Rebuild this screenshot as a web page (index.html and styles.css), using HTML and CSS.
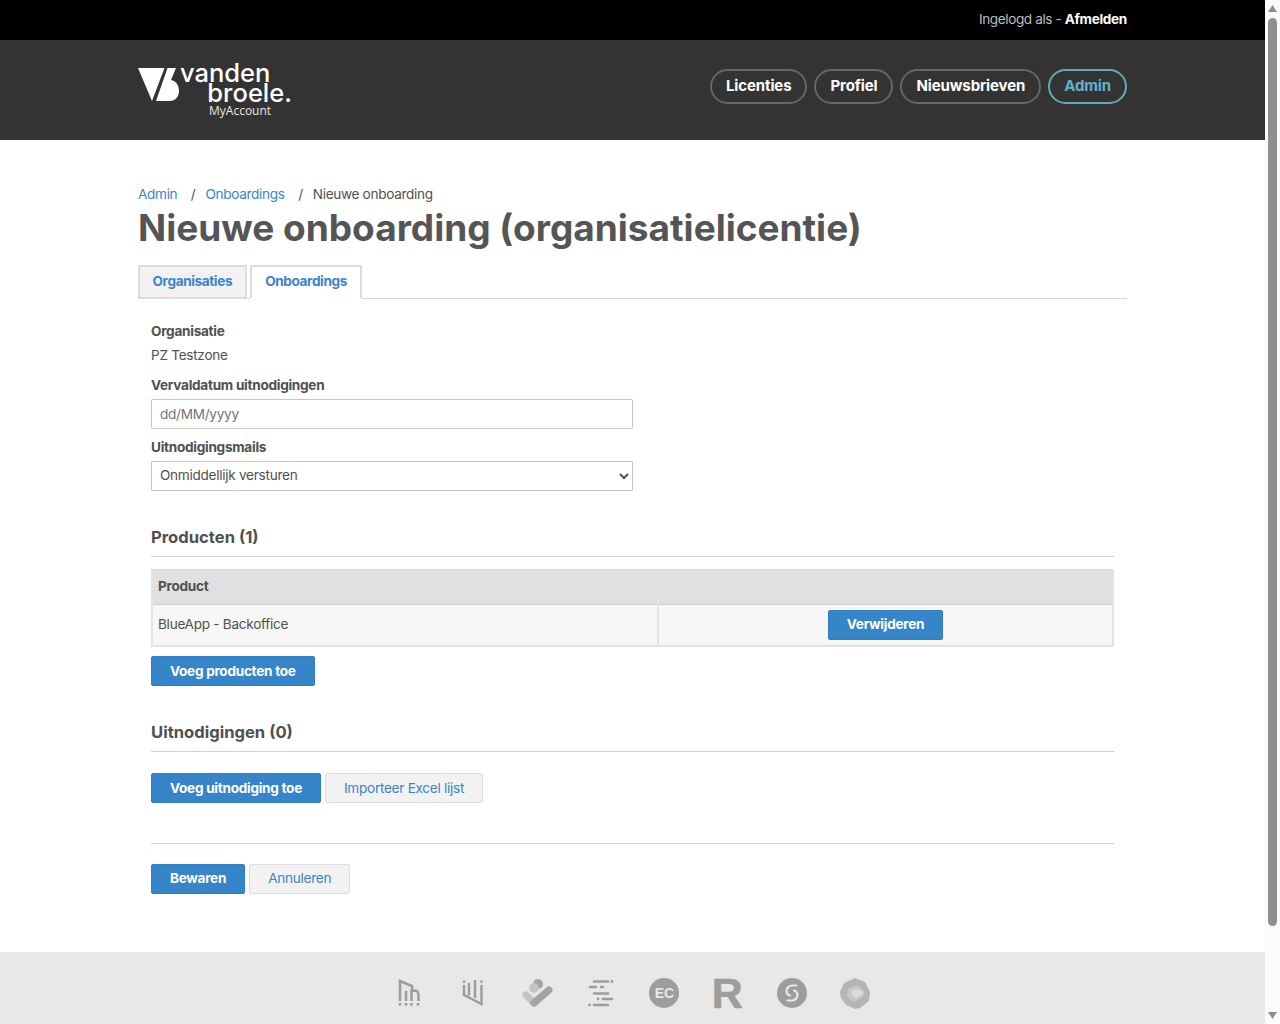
FILE: index.html
```html
<!DOCTYPE html>
<html lang="nl">
<head>
<meta charset="utf-8">
<title>Nieuwe onboarding</title>
<link rel="stylesheet" href="styles.css">
</head>
<body>
<div class="shell">
<div class="page">
  <div class="topbar"><div class="wrap topbar-in"><span>Ingelogd als - </span><a href="#" class="logout">Afmelden</a></div></div>
  <header class="head">
    <div class="wrap head-in">
      <a href="#" class="logo">
        <svg class="logo-mark" width="41" height="33" viewBox="0 0 41 33"><path fill="#fff" d="M0 0h26.500L14 33z"/><path fill="#fff" d="M29.500 0H38L33 12C38.500 13 41 18 41 23 41 29 37 33 32 33H18z"/></svg>
        <span class="logo-text"><span class="logo-l1">vanden</span><span class="logo-l2">broele.</span><span class="logo-l3">MyAccount</span></span>
      </a>
      <nav class="nav">
        <a href="#" class="pill">Licenties</a>
        <a href="#" class="pill">Profiel</a>
        <a href="#" class="pill">Nieuwsbrieven</a>
        <a href="#" class="pill pill-active">Admin</a>
      </nav>
    </div>
  </header>
  <main class="wrap main">
    <div class="crumbs"><a href="#">Admin</a><span class="sep">/</span><a href="#">Onboardings</a><span class="sep">/</span><span>Nieuwe onboarding</span></div>
    <h1>Nieuwe onboarding (organisatielicentie)</h1>
    <div class="tabs"><a href="#" class="tab">Organisaties</a><a href="#" class="tab tab-on">Onboardings</a></div>
    <div class="content">
      <div class="label">Organisatie</div>
      <div class="static">PZ Testzone</div>
      <label class="label lab2">Vervaldatum uitnodigingen</label>
      <input class="field inp" type="text" placeholder="dd/MM/yyyy">
      <label class="label lab3">Uitnodigingsmails</label>
      <select class="field select"><option>Onmiddellijk versturen</option></select>
      <h2 class="sec sec1">Producten (1)</h2>
      <table class="tbl">
        <thead><tr><th class="c1">Product</th><th></th></tr></thead>
        <tbody><tr><td class="name">BlueApp - Backoffice</td><td class="ctr"><button class="btn small">Verwijderen</button></td></tr></tbody>
      </table>
      <div class="row r1"><button class="btn">Voeg producten toe</button></div>
      <h2 class="sec sec2">Uitnodigingen (0)</h2>
      <div class="row r2"><button class="btn">Voeg uitnodiging toe</button><button class="btn ghost">Importeer Excel lijst</button></div>
      <hr class="rule">
      <div class="row r3"><button class="btn">Bewaren</button><button class="btn ghost">Annuleren</button></div>
    </div>
  </main>
  <footer class="foot">
    <div class="cell"><svg width="24" height="28" viewBox="0 0 24 28"><g fill="none" stroke="#9d9d9c" stroke-width="2.600"><path d="M3 22V2l12 5v6M9 22V12M14.500 22V12c5-1 7 0 7 4v6"/></g><g fill="#9d9d9c"><rect x="1.700" y="24" width="2.600" height="2.600"/><rect x="7.700" y="24" width="2.600" height="2.600"/><rect x="13.200" y="24" width="2.600" height="2.600"/><rect x="19.700" y="24" width="2.600" height="2.600"/></g></svg></div>
    <div class="cell"><svg width="22" height="28" viewBox="0 0 22 28"><g fill="none" stroke="#9d9d9c" stroke-width="2.400"><path d="M2 6v10l17.500 9V6M7 4v12.500M13 1v18"/></g><g fill="#9d9d9c"><rect x="0.800" y="1.500" width="2.400" height="2.400"/><rect x="18.300" y="1.500" width="2.400" height="2.400"/></g></svg></div>
    <div class="cell"><svg width="32" height="30" viewBox="0 0 32 30"><circle cx="17" cy="6" r="5" fill="#a3a3a2"/><circle cx="13" cy="10" r="5" fill="#c4c4c3"/><path d="M5 17l8 8" stroke="#c4c4c3" stroke-width="7" stroke-linecap="round"/><path d="M13 25l15-13" stroke="#a3a3a2" stroke-width="7" stroke-linecap="round"/></svg></div>
    <div class="cell"><svg width="26" height="28" viewBox="0 0 26 28"><g stroke="#9d9d9c" stroke-width="2.600" stroke-linecap="round"><path d="M6 2.500h14M2 8h6M13 8h2M6 14.500h14M15 20h9M6 26h14"/></g><circle cx="24" cy="2.500" r="1.400" fill="#9d9d9c"/><circle cx="1.500" cy="26" r="1.400" fill="#9d9d9c"/><circle cx="10" cy="20" r="1.400" fill="#9d9d9c"/></svg></div>
    <div class="cell"><span class="disc">EC</span></div>
    <div class="cell"><span class="bigr">R</span></div>
    <div class="cell"><svg width="30" height="30" viewBox="0 0 30 30"><circle cx="15" cy="15" r="15" fill="#9d9d9c"/><path d="M19.500 7.500H15.500C12 7.500 9.500 10 9.500 13 9.500 15.500 11 17 13 17.500M10.500 22.500H14.500C18 22.500 20.500 20 20.500 17 20.500 14.500 19 13 17 12.500" fill="none" stroke="#e8e8e8" stroke-width="2.200" stroke-linecap="round"/></svg></div>
    <div class="cell"><svg class="gem" width="30" height="31" viewBox="0 0 30 31"><path d="M15 0l10 4 5 10-1 9-9 7-5 1-9-4L1 20 0 14 4 5z" fill="#b5b5b4"/><path d="M9 10l9-3 7 7-3 6-9 4-6-6z" fill="#c9c9c8"/><path d="M14 11l8 2 1 3-7 4-5-4z" fill="#dcdcdb"/></svg></div>
  </footer>
</div>
<div class="sbar">
  <svg class="arrow" width="9" height="7" viewBox="0 0 9 7"><path d="M4.500 0L9 7H0z" fill="#8c8c8c"/></svg>
  <div class="thumb"></div>
  <svg class="arrow" width="9" height="7" viewBox="0 0 9 7"><path d="M4.500 7L9 0H0z" fill="#8c8c8c"/></svg>
</div>
</div>
</body>
</html>
```
FILE: styles.css
```css
* { box-sizing: border-box; }
html, body { margin: 0; height: 100%; overflow: hidden; }
body { font-family: "Inter", "Liberation Sans", sans-serif; font-size: 13.600px; letter-spacing: -0.280px; line-height: 20px; color: #505050; background: #fff; }
a { color: #3a84cd; text-decoration: none; }
.shell { display: flex; height: 1024px; }
.page { flex: 1; min-width: 0; height: 1024px; overflow: hidden; }
.wrap { width: 989px; margin-left: 138px; }
.topbar { height: 40px; background: #000; color: #bdbdbd; letter-spacing: -0.400px; }
.topbar-in { display: flex; justify-content: flex-end; align-items: center; height: 38px; white-space: pre; }
.logout { color: #fff; font-weight: 700; letter-spacing: -0.320px; }
.head { height: 100px; background: #333; }
.head-in { display: flex; justify-content: space-between; align-items: flex-start; }
.logo { display: flex; align-items: flex-start; color: #fff; padding-top: 28px; }
.logo-mark { display: block; }
.logo-text { display: flex; flex-direction: column; width: 112px; margin-left: 1px; margin-top: -5px; }
.logo-l1 { font: 500 25.500px/20px "Inter", sans-serif; letter-spacing: 0; }
.logo-l2 { font: 500 25.500px/20px "Inter", sans-serif; letter-spacing: 0; text-align: right; }
.logo-l3 { font: 400 12px/13px "Open Sans", sans-serif; letter-spacing: 0; color: #e6e6e6; margin-left: 29px; margin-top: 1px; }
.nav { display: flex; gap: 7px; margin-top: 29px; }
.pill { height: 35px; padding: 0 14px; border: 2px solid #666; border-radius: 18px; color: #fff; font-weight: 700; font-size: 15px; letter-spacing: -0.120px; line-height: 30px; }
.pill-active { border-color: #63a9bd; color: #67b0cc; }
.main { padding-top: 44px; }
.crumbs { display: flex; height: 20px; letter-spacing: -0.320px; }
.sep { margin: 0 10px 0 13.500px; }
h1 { margin: 4px 0 0; font-size: 37px; letter-spacing: 0; line-height: 40px; font-weight: 700; color: #555; }
.tabs { display: flex; gap: 3px; margin-top: 17px; height: 34px; border-bottom: 1px solid #d8d8d8; }
.tab { height: 34px; padding: 0 12.500px; line-height: 29px; font-weight: 700; letter-spacing: -0.380px; background: #f2f2f2; border: 2px solid #dcdcdc; }
.tab-on { padding: 0 13.500px; background: #fff; border-bottom-color: #fff; }
.content { padding: 22px 13px 0 13px; }
.label { display: block; font-weight: 700; height: 20px; }
.static { margin-top: 4px; height: 20px; }
.lab2 { margin-top: 10px; }
.lab3 { margin-top: 8px; }
.field { display: block; width: 482px; height: 30px; margin-top: 4px; padding: 0 8px; border: 1px solid #c8c8c8; border-radius: 1px; background: #fff; font: inherit; letter-spacing: inherit; color: #505050; }
.inp { padding-bottom: 1px; }
.select { padding: 0 4px 2px; }
.field::placeholder { color: #757575; }
.sec { margin: 0; font-size: 16.600px; letter-spacing: 0; line-height: 24px; font-weight: 700; padding-bottom: 7px; border-bottom: 1px solid #cfcfcf; height: 32px; }
.sec1 { margin-top: 34px; }
.tbl { width: 963px; margin-top: 12px; border-collapse: collapse; table-layout: fixed; }
.tbl th, .tbl td { border: 2px solid #e3e3e3; padding: 0 5px; text-align: left; }
.tbl th { height: 34px; padding-bottom: 3px; background: #e0e0e0; border-bottom: 1px solid #cfcfcf; border-top-color: #dcdcdc; }
.tbl td { height: 42px; background: #f7f7f7; border-top: 1px solid #cfcfcf; }
.tbl .name { padding-bottom: 2px; }
.c1 { width: 506px; }
.tbl .ctr { text-align: center; }
.btn { display: inline-block; height: 30px; padding: 0 18px; border: 1px solid #2f7fc6; border-radius: 2px; background: #3585c8; color: #fff; font: 700 13.600px/26px "Inter", sans-serif; letter-spacing: -0.280px; }
.small { padding: 0 17.500px 2px; }
.ghost { background: #f2f2f2; border: 1px solid #dedede; color: #3a84cd; font-weight: 400; margin-left: 4px; }
.row { display: flex; }
.r1 { margin-top: 9px; }
.sec2 { margin-top: 34px; }
.r2 { margin-top: 21px; }
.rule { margin: 40px 0 0; border: 0; border-top: 1px solid #cfcfcf; }
.r3 { margin-top: 20px; }
.r3 .btn { padding-bottom: 2px; }
.foot { margin-top: 58px; height: 72px; background: #e8e8e8; display: flex; justify-content: center; align-items: flex-start; padding-top: 25px; }
.cell { flex: none; width: 63.800px; height: 32px; display: flex; justify-content: center; align-items: center; }
.gem { margin-left: -2px; }
.disc { width: 30px; height: 30px; border-radius: 50%; background: #9d9d9c; color: #e8e8e8; text-align: center; font: 700 14px/30px "Liberation Sans", sans-serif; letter-spacing: 0; }
.bigr { color: #9d9d9c; font: 700 43px/32px "Liberation Sans", sans-serif; letter-spacing: 0; margin-left: -2px; -webkit-text-stroke: 0.600px #9d9d9c; }
.sbar { flex: none; width: 15px; height: 1024px; background: #fbfbfb; display: flex; flex-direction: column; align-items: center; padding-top: 5px; padding-bottom: 5px; }
.arrow { display: block; flex: none; }
.thumb { width: 9px; height: 908px; margin: 6px 0 auto; border-radius: 5px; background: #8f8f8f; }
```
